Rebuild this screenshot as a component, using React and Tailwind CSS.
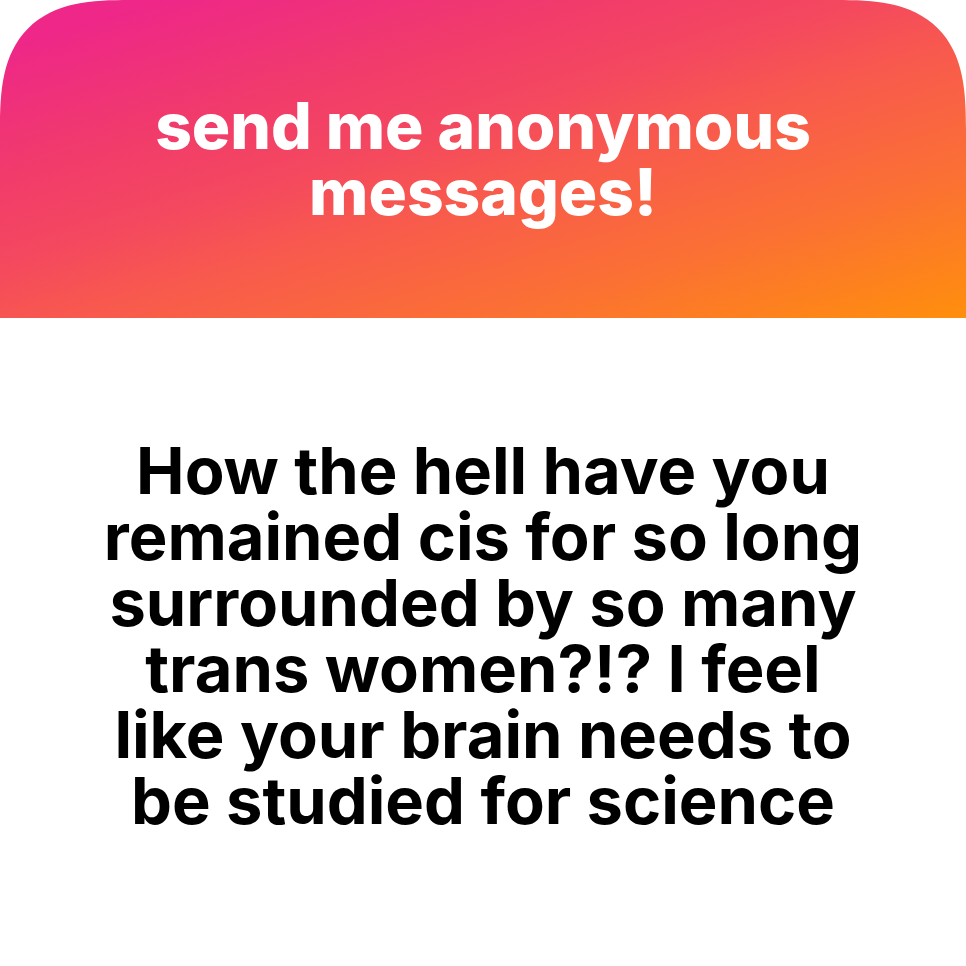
const prompt = 'send me anonymous messages!';

const message =
  'How the hell have you remained cis for so long surrounded by so many trans women?!? I feel like your brain needs to be studied for science';

const MessageCard = ({ title, children }) => (
  <article className="flex min-h-screen flex-col overflow-hidden rounded-t-[130px] bg-white text-center font-['Inter','Liberation_Sans',sans-serif] leading-[66px] [corner-shape:superellipse(1.5)]">
    <header className="flex h-[318px] items-center justify-center bg-linear-[163deg,#ee2788_8%,#f13b6b_29%,#f4485f_43%,#f8594e_55%,#fb7034_76%,#ff8f0c_100%] px-24 text-white">
      <h1 className="max-w-[700px] text-[64px]/[66px] font-extrabold">{title}</h1>
    </header>
    <div className="flex grow items-center justify-center px-24 pb-3 text-black">
      <p className="max-w-[774px] text-[65px]/[66px] font-bold">{children}</p>
    </div>
  </article>
);

export default function App() {
  return (
    <main className="bg-white">
      <MessageCard title={prompt}>{message}</MessageCard>
    </main>
  );
}
